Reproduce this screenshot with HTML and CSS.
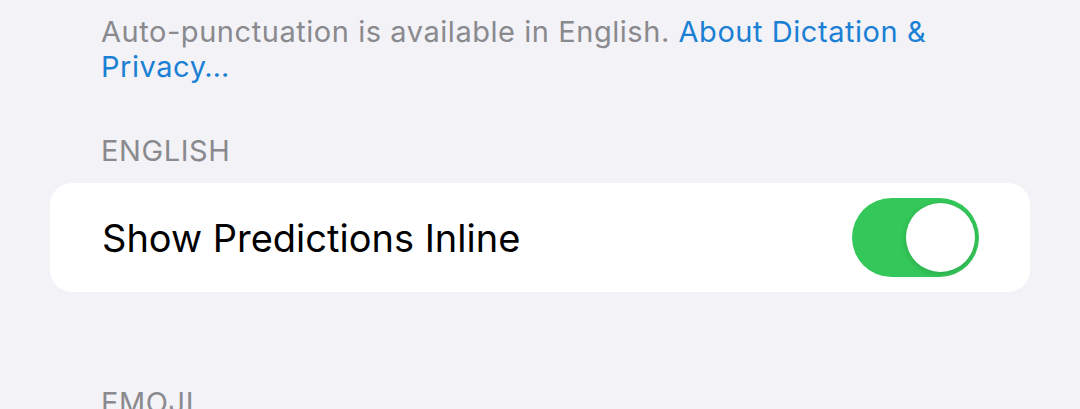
FILE: index.html
```html
<!DOCTYPE html>
<html lang="en">
<head>
  <meta charset="UTF-8" />
  <meta name="viewport" content="width=device-width, initial-scale=1.0" />
  <title>Keyboards</title>
  <link rel="stylesheet" href="styles.css">
</head>
<body>
  <div class="settings">
    <p class="footer">
      Auto-punctuation is available in English.
      <a href="#">About Dictation &amp; Privacy…</a>
    </p>

    <div class="section">
      <div class="section-header">ENGLISH</div>
      <div class="group">
        <div class="row">
          <span class="row-label">Show Predictions Inline</span>
          <label class="switch">
            <input type="checkbox" checked>
            <span class="knob"></span>
          </label>
        </div>
      </div>
    </div>

    <div class="section">
      <div class="section-header">EMOJI</div>
    </div>
  </div>
</body>
</html>
```

FILE: styles.css
```css
body {
  margin: 0;
  background: #f2f2f7;
  font-family: 'Inter', 'Liberation Sans', sans-serif;
  overflow: hidden;
}
.settings {
  padding: 0 50px;
}
.footer {
  margin: 0;
  padding: 14px 51px 0;
  font-size: 29px;
  line-height: 35px;
  letter-spacing: 0.55px;
  color: #8a8a8e;
}
.footer a {
  color: #1b7fd4;
  text-decoration: none;
}
.section {
  margin-top: 49px;
}
.section-header {
  padding-left: 51px;
  font-size: 29px;
  line-height: 35px;
  letter-spacing: 0.6px;
  color: #8a8a8e;
  margin-bottom: 15px;
}
.group {
  background: #fff;
  border-radius: 22px;
}
.row {
  display: flex;
  align-items: center;
  justify-content: space-between;
  height: 109px;
  padding: 0 51px 0 52px;
}
.row-label {
  font-size: 38px;
  color: #000;
}
.switch {
  position: relative;
  width: 127px;
  height: 79px;
}
.switch input {
  display: none;
}
.knob {
  position: absolute;
  inset: 0;
  background: #34c759;
  border-radius: 40px;
}
.knob::after {
  content: "";
  position: absolute;
  top: 5px;
  right: 4px;
  width: 69px;
  height: 69px;
  border-radius: 50%;
  background: #fff;
  box-shadow: 0 2px 6px rgba(0, 0, 0, 0.15);
}
.section + .section {
  margin-top: 93px;
}
```
